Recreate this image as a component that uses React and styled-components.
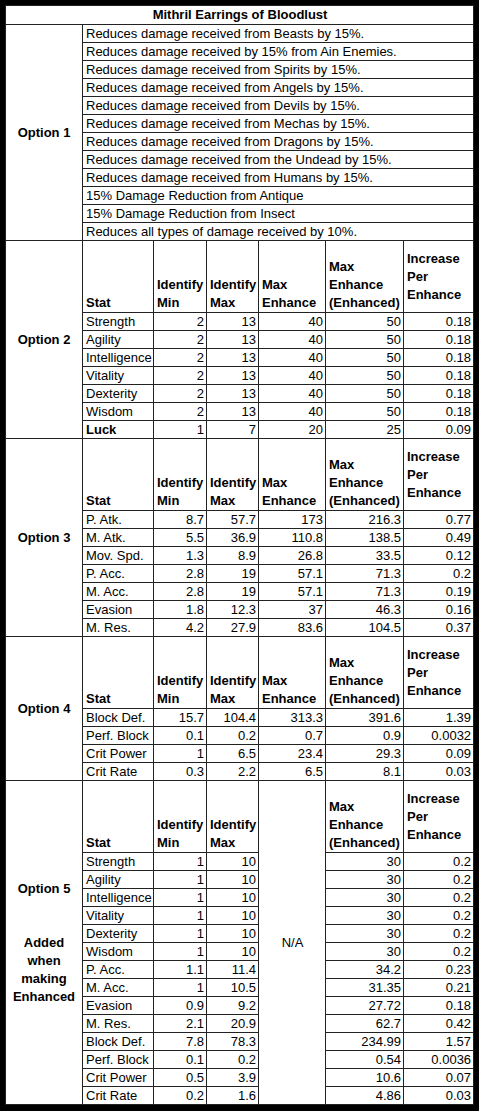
import React from 'react';
import styled, { createGlobalStyle } from 'styled-components';

const GlobalStyle = createGlobalStyle`
  html, body {
    background-color: #000;
    margin: 0;
    padding: 0;
  }
  body {
    font-family: 'Liberation Sans', Arial, sans-serif;
  }
`;

const Frame = styled.div`
  padding: 5px 6px 6px 5px;
  background-color: #000;
`;

const Sheet = styled.table`
  background-color: #fff;
  border: 1px solid #333;
  border-collapse: collapse;
  color: #000;
  font-family: 'Liberation Sans', Arial, sans-serif;
  font-size: 13px;
  table-layout: fixed;
  width: 468px;
`;

const Col = styled.col`
  width: ${(p) => p.$w}px;
`;

const Cell = styled.td`
  border: 1px solid #222;
  height: 17px;
  line-height: 17px;
  overflow: hidden;
  padding: 0 2px 0 3px;
  white-space: nowrap;
`;

const TitleCell = styled(Cell)`
  font-weight: 700;
  height: 18px;
  line-height: 18px;
  text-align: center;
`;

const OptionCell = styled(Cell)`
  font-weight: 700;
  line-height: 18px;
  padding: 0 2px;
  text-align: center;
  vertical-align: middle;
`;

const NoteCell = styled(Cell)`
  text-align: left;
`;

const HeadCell = styled(Cell)`
  font-weight: 700;
  height: 71px;
  line-height: 18px;
  vertical-align: ${(p) => (p.$middle ? 'middle' : 'bottom')};
`;

const StatCell = styled(Cell)`
  font-weight: ${(p) => (p.$bold ? 700 : 400)};
`;

const NumCell = styled(Cell)`
  padding: 0 2px 0 0;
  text-align: right;
`;

const NaCell = styled(Cell)`
  text-align: center;
  vertical-align: middle;
`;

const option1 = [
  'Reduces damage received from Beasts by 15%.',
  'Reduces damage received by 15% from Ain Enemies.',
  'Reduces damage received from Spirits by 15%.',
  'Reduces damage received from Angels by 15%.',
  'Reduces damage received from Devils by 15%.',
  'Reduces damage received from Mechas by 15%.',
  'Reduces damage received from Dragons by 15%.',
  'Reduces damage received from the Undead by 15%.',
  'Reduces damage received from Humans by 15%.',
  '15% Damage Reduction from Antique',
  '15% Damage Reduction from Insect',
  'Reduces all types of damage received by 10%.',
];

const statTables = [
  {
    label: 'Option 2',
    rows: [
      ['Strength', '2', '13', '40', '50', '0.18'],
      ['Agility', '2', '13', '40', '50', '0.18'],
      ['Intelligence', '2', '13', '40', '50', '0.18'],
      ['Vitality', '2', '13', '40', '50', '0.18'],
      ['Dexterity', '2', '13', '40', '50', '0.18'],
      ['Wisdom', '2', '13', '40', '50', '0.18'],
      ['Luck', '1', '7', '20', '25', '0.09', true],
    ],
  },
  {
    label: 'Option 3',
    rows: [
      ['P. Atk.', '8.7', '57.7', '173', '216.3', '0.77'],
      ['M. Atk.', '5.5', '36.9', '110.8', '138.5', '0.49'],
      ['Mov. Spd.', '1.3', '8.9', '26.8', '33.5', '0.12'],
      ['P. Acc.', '2.8', '19', '57.1', '71.3', '0.2'],
      ['M. Acc.', '2.8', '19', '57.1', '71.3', '0.19'],
      ['Evasion', '1.8', '12.3', '37', '46.3', '0.16'],
      ['M. Res.', '4.2', '27.9', '83.6', '104.5', '0.37'],
    ],
  },
  {
    label: 'Option 4',
    rows: [
      ['Block Def.', '15.7', '104.4', '313.3', '391.6', '1.39'],
      ['Perf. Block', '0.1', '0.2', '0.7', '0.9', '0.0032'],
      ['Crit Power', '1', '6.5', '23.4', '29.3', '0.09'],
      ['Crit Rate', '0.3', '2.2', '6.5', '8.1', '0.03'],
    ],
  },
];

const option5 = [
  ['Strength', '1', '10', '30', '0.2'],
  ['Agility', '1', '10', '30', '0.2'],
  ['Intelligence', '1', '10', '30', '0.2'],
  ['Vitality', '1', '10', '30', '0.2'],
  ['Dexterity', '1', '10', '30', '0.2'],
  ['Wisdom', '1', '10', '30', '0.2'],
  ['P. Acc.', '1.1', '11.4', '34.2', '0.23'],
  ['M. Acc.', '1', '10.5', '31.35', '0.21'],
  ['Evasion', '0.9', '9.2', '27.72', '0.18'],
  ['M. Res.', '2.1', '20.9', '62.7', '0.42'],
  ['Block Def.', '7.8', '78.3', '234.99', '1.57'],
  ['Perf. Block', '0.1', '0.2', '0.54', '0.0036'],
  ['Crit Power', '0.5', '3.9', '10.6', '0.07'],
  ['Crit Rate', '0.2', '1.6', '4.86', '0.03'],
];

const widths = [77, 71, 53, 52, 67, 78, 70];

function StatBlock({ label, rows }) {
  return (
    <>
      <tr>
        <OptionCell rowSpan={rows.length + 1}>{label}</OptionCell>
        <HeadCell>Stat</HeadCell>
        <HeadCell>Identify<br />Min</HeadCell>
        <HeadCell>Identify<br />Max</HeadCell>
        <HeadCell>Max<br />Enhance</HeadCell>
        <HeadCell>Max<br />Enhance<br />(Enhanced)</HeadCell>
        <HeadCell $middle>Increase<br />Per<br />Enhance</HeadCell>
      </tr>
      {rows.map(([stat, min, max, enh, enhEnh, inc, bold]) => (
        <tr key={stat}>
          <StatCell $bold={bold}>{stat}</StatCell>
          <NumCell>{min}</NumCell>
          <NumCell>{max}</NumCell>
          <NumCell>{enh}</NumCell>
          <NumCell>{enhEnh}</NumCell>
          <NumCell>{inc}</NumCell>
        </tr>
      ))}
    </>
  );
}

export default function App() {
  return (
    <>
      <GlobalStyle />
      <Frame>
        <Sheet>
          <colgroup>
            {widths.map((w, i) => (
              <Col key={i} $w={w} />
            ))}
          </colgroup>
          <tbody>
            <tr>
              <TitleCell colSpan={7}>Mithril Earrings of Bloodlust</TitleCell>
            </tr>
            {option1.map((text, i) => (
              <tr key={text}>
                {i === 0 && <OptionCell rowSpan={option1.length}>Option 1</OptionCell>}
                <NoteCell colSpan={6}>{text}</NoteCell>
              </tr>
            ))}
            {statTables.map((t) => (
              <StatBlock key={t.label} label={t.label} rows={t.rows} />
            ))}
            <tr>
              <OptionCell rowSpan={option5.length + 1}>
                Option 5<br /><br /><br />Added<br />when<br />making<br />Enhanced
              </OptionCell>
              <HeadCell>Stat</HeadCell>
              <HeadCell>Identify<br />Min</HeadCell>
              <HeadCell>Identify<br />Max</HeadCell>
              <NaCell rowSpan={option5.length + 1}>N/A</NaCell>
              <HeadCell>Max<br />Enhance<br />(Enhanced)</HeadCell>
              <HeadCell $middle>Increase<br />Per<br />Enhance</HeadCell>
            </tr>
            {option5.map(([stat, min, max, enhEnh, inc]) => (
              <tr key={stat}>
                <StatCell>{stat}</StatCell>
                <NumCell>{min}</NumCell>
                <NumCell>{max}</NumCell>
                <NumCell>{enhEnh}</NumCell>
                <NumCell>{inc}</NumCell>
              </tr>
            ))}
          </tbody>
        </Sheet>
      </Frame>
    </>
  );
}
